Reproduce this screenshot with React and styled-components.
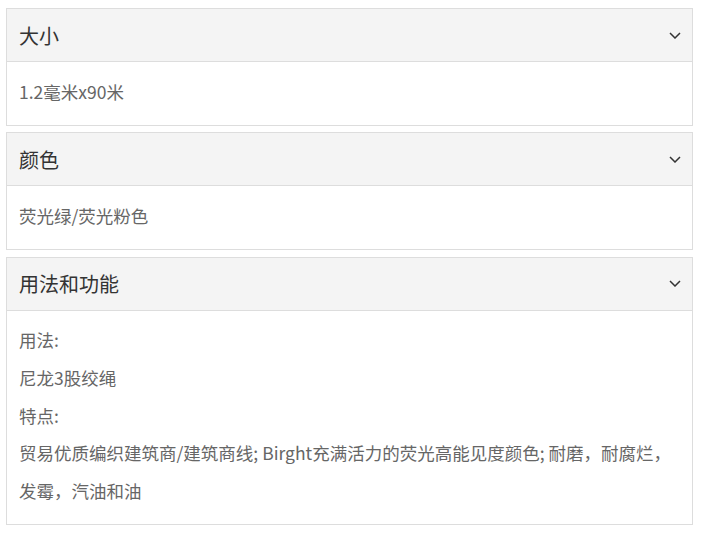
import React from "react";
import styled, { createGlobalStyle } from "styled-components";

const Global = createGlobalStyle`
  html, body { margin: 0; padding: 0; background: #fff; }
  body { font-family: "Noto Sans CJK SC", "Noto Sans", sans-serif; }
`;

const Wrap = styled.div`
  padding: 8px 20px 8px 6px;
  display: flex;
  flex-direction: column;
  gap: 6.75px;
`;

const Panel = styled.section`
  border: 1px solid #dddddd;
  background: #fff;
`;

const Header = styled.div`
  height: 52px;
  background: #f4f4f4;
  border-bottom: 1px solid #dddddd;
  display: flex;
  align-items: center;
  justify-content: space-between;
  padding: 0 11px 0 12px;
  font-size: 20px;
  color: #333;
`;

const Body = styled.div`
  padding: 10.5px 12px 14.25px;
  font-size: 17.5px;
  line-height: 37.75px;
  color: #666;
`;

const Line = styled.div``;

const Chevron = () => (
  <svg width="12" height="7" viewBox="0 0 12 7" fill="none">
    <path d="M1 1 L6 6 L11 1" stroke="#333" strokeWidth="1.5" />
  </svg>
);

const data = [
  { title: "大小", lines: ["1.2毫米x90米"] },
  { title: "颜色", lines: ["荧光绿/荧光粉色"] },
  {
    title: "用法和功能",
    lines: [
      "用法:",
      "尼龙3股绞绳",
      "特点:",
      "贸易优质编织建筑商/建筑商线; Birght充满活力的荧光高能见度颜色; 耐磨，耐腐烂，发霉，汽油和油",
    ],
  },
];

export default function App() {
  return (
    <>
      <Global />
      <Wrap>
        {data.map((p) => (
          <Panel key={p.title}>
            <Header>
              <span>{p.title}</span>
              <Chevron />
            </Header>
            <Body>
              {p.lines.map((l, i) => (
                <Line key={i}>{l}</Line>
              ))}
            </Body>
          </Panel>
        ))}
      </Wrap>
    </>
  );
}
